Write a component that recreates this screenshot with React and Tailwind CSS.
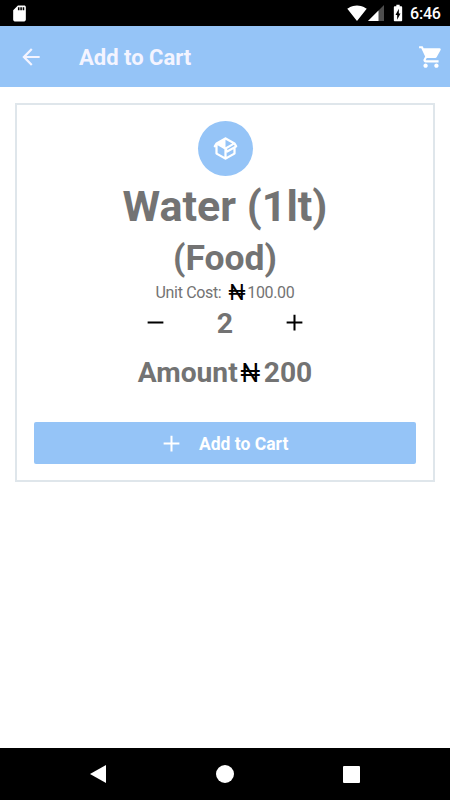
import { useState } from "react";

const UNIT_COST = 100;

const Icon = ({ d, className }) => (
  <svg viewBox="0 0 24 24" fill="currentColor" className={`shrink-0 ${className}`}>
    <path d={d} />
  </svg>
);

const icons = {
  sdCard: "M18 2h-8L4.02 8 4 20c0 1.1.9 2 2 2h12c1.1 0 2-.9 2-2V4c0-1.1-.9-2-2-2zm-6 6h-2V4h2v4zm3 0h-2V4h2v4zm3 0h-2V4h2v4z",
  wifi: "M12.01 21.49L23.64 7c-.45-.34-4.93-4-11.64-4C5.28 3 .81 6.66.36 7l11.63 14.49.01.01.01-.01z",
  battery: "M15.67 4H14V2h-4v2H8.33C7.6 4 7 4.6 7 5.33v15.33C7 21.4 7.6 22 8.33 22h7.33c.74 0 1.34-.6 1.34-1.33V5.33C17 4.6 16.4 4 15.67 4zM11 20v-5.5H9L13 7v5.5h2L11 20z",
  back: "M20 11H7.83l5.59-5.59L12 4l-8 8 8 8 1.41-1.41L7.83 13H20v-2z",
  cart: "M7 18c-1.1 0-1.99.9-1.99 2S5.9 22 7 22s2-.9 2-2-.9-2-2-2zM1 2v2h2l3.6 7.59-1.35 2.45c-.16.28-.25.61-.25.96 0 1.1.9 2 2 2h12v-2H7.42c-.14 0-.25-.11-.25-.25l.03-.12.9-1.63h7.45c.75 0 1.41-.41 1.75-1.03l3.58-6.49A1.003 1.003 0 0020 4H5.21l-.94-2H1zm16 16c-1.1 0-1.99.9-1.99 2s.89 2 1.99 2 2-.9 2-2-.9-2-2-2z",
  box: "M2,10.96C1.5,10.68 1.35,10.07 1.63,9.59L3.13,7C3.24,6.8 3.41,6.66 3.6,6.58L11.43,2.18C11.59,2.06 11.79,2 12,2C12.21,2 12.41,2.06 12.57,2.18L20.47,6.62C20.66,6.72 20.82,6.88 20.91,7.08L22.36,9.6C22.64,10.08 22.47,10.69 22,10.96L21,11.54V16.5C21,16.88 20.79,17.21 20.47,17.38L12.57,21.82C12.41,21.94 12.21,22 12,22C11.79,22 11.59,21.94 11.43,21.82L3.53,17.38C3.21,17.21 3,16.88 3,16.5V10.96C2.7,11.13 2.32,11.14 2,10.96M12,4.15V4.15L12,10.85V10.85L17.96,7.5L12,4.15M5,15.91L11,19.29V12.58L5,9.21V15.91M19,15.91V12.69L14,15.59C13.67,15.77 13.3,15.76 13,15.6V19.29L19,15.91M13.85,13.36L20.13,9.73L19.55,8.72L13.27,12.35L13.85,13.36Z",
  plus: "M19 12.9h-6.1V19h-1.8v-6.1H5v-1.8h6.1V5h1.8v6.1H19z",
  minus: "M19 12.9H5v-1.8h14z",
};

const StatusBar = () => (
  <div className="h-[26px] bg-black text-white flex items-center pl-[10px] pr-[9px]">
    <Icon d={icons.sdCard} className="size-[19px]" />
    <div className="ml-auto flex items-center">
      <Icon d={icons.wifi} className="size-5" />
      {/* Signal strength, half full */}
      <svg viewBox="0 0 16 16" className="size-4 ml-px">
        <path d="M0 16L16 0v16z" fill="#4d4d4d" />
        <path d="M0 16L10.500 5.500V16z" fill="#fff" />
      </svg>
      <Icon d={icons.battery} className="size-5 ml-1" />
      <span className="ml-[2px] pt-[2px] w-[31px] text-base tracking-[-0.2px] font-medium leading-none">6:46</span>
    </div>
  </div>
);

const Header = () => (
  <header className="h-[61px] bg-[#95c4f7] flex items-center pl-[18px] pr-[6px] text-[#f4f4ff]">
    <button aria-label="Back"><Icon d={icons.back} className="size-[26px]" /></button>
    <h1 className="ml-[35px] mt-[3px] text-[22px] font-bold leading-none">Add to Cart</h1>
    <button aria-label="Cart" className="ml-auto text-white"><Icon d={icons.cart} className="size-[26px]" /></button>
  </header>
);

const NavBar = () => (
  <nav className="h-[52px] bg-black flex items-center justify-between px-[90px]">
    <svg viewBox="0 0 16 18" className="w-4 h-[18px]"><path d="M16 0v18L0 9z" fill="#fff" /></svg>
    <div className="size-[18px] rounded-full bg-white" />
    <div className="size-[17px] rounded-[1px] bg-white" />
  </nav>
);

const App = () => {
  const [quantity, setQuantity] = useState(2);

  return (
    <div className="h-screen w-full flex flex-col bg-white font-['Roboto',sans-serif] text-[#737373]">
      <StatusBar />
      <Header />

      <main className="flex-1 px-[15px] pt-4">
        <section className="border-2 border-[#dfe6eb] py-4 px-[17px] flex flex-col items-center">
          <div className="size-[55px] rounded-full bg-[#95c4f7] text-white flex items-center justify-center">
            <Icon d={icons.box} className="size-[27px]" />
          </div>
          <h2 className="h-[60px] leading-[60px] text-[43px] font-bold">Water (1lt)</h2>
          <h3 className="h-11 leading-[44px] text-[35.500px] font-bold">(Food)</h3>
          <div className="h-[26px] flex items-center text-base tracking-[-0.35px]">
            <span>Unit Cost:</span>
            <span className="ml-[6px] mr-px pb-px w-[19px] text-center text-[22.500px] leading-none text-black">
              <span className="inline-block scale-x-95">₦</span>
            </span>
            <span>{UNIT_COST.toFixed(2)}</span>
          </div>

          {/* Quantity */}
          <div className="h-[34px] w-[166px] flex items-center justify-between text-black">
            <button aria-label="Less" className="pb-[2px]" onClick={() => setQuantity(Math.max(1, quantity - 1))}>
              <Icon d={icons.minus} className="size-[27px]" />
            </button>
            <span className="pt-[2px] text-[28.500px] font-bold leading-none text-[#737373]">{quantity}</span>
            <button aria-label="More" className="pb-[2px]" onClick={() => setQuantity(quantity + 1)}>
              <Icon d={icons.plus} className="size-[27px]" />
            </button>
          </div>

          <div className="h-[66px] flex items-center text-[28.200px] font-bold leading-none">
            <span>Amount</span>
            <span className="w-[26px] text-center text-[26px] font-normal text-black">
              <span className="inline-block scale-x-95">₦</span>
            </span>
            <span>{UNIT_COST * quantity}</span>
          </div>

          <button className="mt-4 h-[42px] w-full rounded-[2px] bg-[#95c4f7] text-white flex items-center pl-[124px]">
            <Icon d={icons.plus} className="size-[27px]" />
            <span className="ml-[14px] pt-[2px] text-[17.500px] font-bold">Add to Cart</span>
          </button>
        </section>
      </main>

      <NavBar />
    </div>
  );
};

export default App;
